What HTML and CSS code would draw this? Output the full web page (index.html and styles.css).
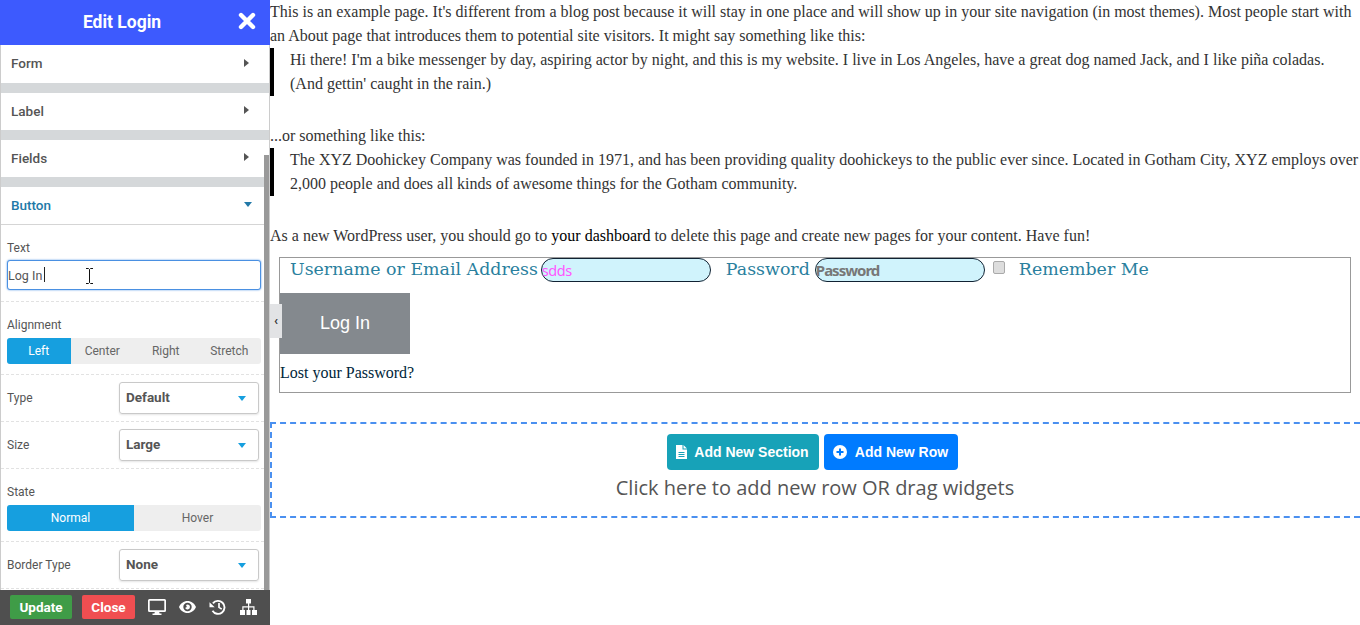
FILE: index.html
```html
<!DOCTYPE html>
<html>
  <head>
    <meta charset="utf-8">
    <meta name="viewport" content="width=device-width">
    <title>Edit Login</title>
    <link rel="stylesheet" href="styles.css">
  </head>
  <body>
    <div class="sidebar">
      <div class="side-head">
        <span class="side-title">Edit Login</span>
        <svg class="side-close" width="18" height="18" viewBox="0 0 18 18"><path d="M3 3l12 12M15 3L3 15" stroke="#fff" stroke-width="4.4" stroke-linecap="round"/></svg>
      </div>

      <div class="side-body">
        <div class="acc"><span>Form</span><i class="arrow-right"></i></div>
        <div class="acc"><span>Label</span><i class="arrow-right"></i></div>
        <div class="acc"><span>Fields</span><i class="arrow-right"></i></div>
        <div class="acc open"><span>Button</span><i class="arrow-down"></i></div>

        <div class="field field-text">
          <label>Text</label>
          <div class="text-wrap">
            <input class="text-input" type="text" value="Log In">
            <i class="caret"></i>
            <svg class="ibeam" width="9" height="16" viewBox="0 0 9 16"><path d="M1 .5h2.500l1 1 1-1H8M4.500 1.500v13M1 15.500h2.500l1-1 1 1H8" fill="none" stroke="#111" stroke-width="1"/></svg>
          </div>
        </div>

        <div class="field field-seg">
          <label>Alignment</label>
          <div class="seg">
            <span class="active">Left</span><span>Center</span><span>Right</span><span>Stretch</span>
          </div>
        </div>

        <div class="field field-row">
          <label>Type</label>
          <div class="select"><b>Default</b><i class="arrow-blue"></i></div>
        </div>

        <div class="field field-row">
          <label>Size</label>
          <div class="select"><b>Large</b><i class="arrow-blue"></i></div>
        </div>

        <div class="field field-seg">
          <label>State</label>
          <div class="seg">
            <span class="active">Normal</span><span>Hover</span>
          </div>
        </div>

        <div class="field field-row">
          <label>Border Type</label>
          <div class="select"><b>None</b><i class="arrow-blue"></i></div>
        </div>
      </div>

      <div class="scroll-thumb"></div>

      <div class="side-foot">
        <button class="btn-update">Update</button>
        <button class="btn-close">Close</button>
        <svg class="foot-icon" width="18" height="16" viewBox="0 0 18 16"><path fill="#fff" d="M1.500 0h15A1.500 1.500 0 0 1 18 1.500v10a1.500 1.500 0 0 1-1.500 1.500H11.200l.4 1.500h1.900V16h-9v-1.500h1.900l.4-1.500H1.500A1.500 1.500 0 0 1 0 11.500v-10A1.500 1.500 0 0 1 1.500 0zM1.700 1.700v9.600h14.600V1.700z"/></svg>
        <svg class="foot-icon" width="17" height="12" viewBox="0 0 17 12"><path fill="#fff" fill-rule="evenodd" d="M8.500 0C12.300 0 15.500 2.400 17 6c-1.500 3.600-4.700 6-8.500 6S1.500 9.600 0 6c1.500-3.600 4.700-6 8.500-6zm0 1.800A4.200 4.200 0 1 0 8.500 10.200 4.200 4.200 0 0 0 8.500 1.800zM8.500 3.500a2.500 2.500 0 1 1-2.400 3.200c.9.300 1.900-.6 1.500-1.600-.2-.5-.5-.8-.8-.9.400-.4 1-.7 1.700-.7z"/></svg>
        <svg class="foot-icon" width="18" height="16" viewBox="0 0 17 16"><path fill="none" stroke="#fff" stroke-width="1.900" d="M3.400 4.300A6.500 6.500 0 1 1 3 11.800"/><path fill="#fff" d="M0 3.200l5.200 5H0z"/><path fill="none" stroke="#fff" stroke-width="1.700" d="M9.500 4v4.400l2.700 1.700"/></svg>
        <svg class="foot-icon" width="17" height="16" viewBox="0 0 17 16"><path fill="#fff" d="M6 0h5v4.500H9.200v2.700h5.300V11h2.500v5h-5v-5h1.300V8.400H9.200V11h1.300v5h-4v-5h1.500V8.400H3.500V11H5v5H0v-5h2.300V7.200H8V4.500H6z"/></svg>
      </div>
    </div>

    <div class="collapse-tab">‹</div>

    <div class="content">
      <p>This is an example page. It's different from a blog post because it will stay in one place and will show up in your site navigation (in most themes). Most people start with an About page that introduces them to potential site visitors. It might say something like this:</p>
      <blockquote>Hi there! I'm a bike messenger by day, aspiring actor by night, and this is my website. I live in Los Angeles, have a great dog named Jack, and I like piña coladas. (And gettin' caught in the rain.)</blockquote>
      <p>...or something like this:</p>
      <blockquote>The XYZ Doohickey Company was founded in 1971, and has been providing quality doohickeys to the public ever since. Located in Gotham City, XYZ employs over 2,000 people and does all kinds of awesome things for the Gotham community.</blockquote>
      <p class="last">As a new WordPress user, you should go to <a href="#">your dashboard</a> to delete this page and create new pages for your content. Have fun!</p>

      <form class="login">
        <div class="login-fields">
          <label class="login-label first">Username or Email Address</label>
          <input class="login-input" type="text" value="sdds">
          <label class="login-label second">Password</label>
          <input class="login-input pass" type="text" placeholder="Password">
          <input class="login-check" type="checkbox">
          <label class="login-label third">Remember Me</label>
        </div>
        <button class="login-btn" type="button">Log In</button>
        <a class="lost" href="#">Lost your Password?</a>
      </form>

      <div class="dropzone">
        <div class="drop-btns">
          <span class="drop-btn teal">
            <svg width="11" height="14" viewBox="0 0 11 14"><path fill="#fff" d="M0 0h6.500v4.500H11V14H0zM7.500 0L11 3.500H7.500z"/><path stroke="#17a2b8" stroke-width="1" d="M2.500 7.500h6M2.500 9.500h6M2.500 11.500h6"/></svg>
            Add New Section
          </span>
          <span class="drop-btn blue">
            <svg width="14" height="14" viewBox="0 0 14 14"><circle cx="7" cy="7" r="7" fill="#fff"/><path d="M7 3.500v7M3.500 7h7" stroke="#007bff" stroke-width="2"/></svg>
            Add New Row
          </span>
        </div>
        <div class="drop-text">Click here to add new row OR drag widgets</div>
      </div>
    </div>
  </body>
</html>
```

FILE: styles.css
```css
html, body {
  margin: 0;
  height: 625px;
  overflow: hidden;
}

body {
  display: flex;
  position: relative;
  background-color: #fff;
  font-family: 'Liberation Serif', serif;
  font-size: 16px;
  line-height: 24px;
  color: #333;
}

/* left editor panel */
.sidebar {
  position: relative;
  flex: 0 0 270px;
  width: 270px;
  height: 625px;
  display: flex;
  flex-direction: column;
  font-family: Roboto, sans-serif;
  color: #555;
}

.side-head {
  flex: 0 0 45px;
  display: flex;
  align-items: center;
  justify-content: center;
  position: relative;
  padding-bottom: 2px;
  box-sizing: border-box;
  background-color: #3d5afe;
}

.side-title {
  color: #fff;
  font-size: 17.5px;
  font-weight: bold;
  margin-right: 26px;
}

.side-close {
  position: absolute;
  right: 14px;
  top: 12px;
}

.side-body {
  flex: 1;
  min-height: 0;
  overflow: hidden;
  border-left: 1px solid #ccc;
  border-right: 1px solid #ccc;
}

.acc {
  height: 37px;
  margin-bottom: 10px;
  padding: 0 20px 2px 10px;
  box-sizing: border-box;
  display: flex;
  align-items: center;
  justify-content: space-between;
  font-size: 13.5px;
  font-weight: 500;
  background-color: #fff;
  box-shadow: 0 10px 0 #d5d8da;
}

.acc:first-child {
  height: 38px;
}

.acc.open {
  height: 38px;
  margin-bottom: 0;
  border-bottom: 1px solid #d5d5d5;
  color: #2279a8;
  box-shadow: none;
}

.arrow-right {
  width: 0;
  height: 0;
  margin-top: -1px;
  border-left: 5px solid #555;
  border-top: 4px solid transparent;
  border-bottom: 4px solid transparent;
}

.arrow-down {
  width: 0;
  height: 0;
  margin-right: -3px;
  border-top: 5px solid #2279a8;
  border-left: 4px solid transparent;
  border-right: 4px solid transparent;
}

.field {
  padding: 0 8px 0 6px;
  border-bottom: 1px dashed #e2e2e2;
  font-size: 12px;
  line-height: 14px;
  box-sizing: border-box;
}

.field label {
  display: block;
}

.field-text {
  height: 77px;
  padding-top: 16px;
}

.text-wrap {
  position: relative;
  margin-top: 5px;
}

.text-input {
  display: block;
  width: 100%;
  height: 30px;
  box-sizing: border-box;
  padding: 0;
  border: 1px solid #4a90e2;
  border-radius: 3px;
  box-shadow: 0 0 2px #4a90e2;
  outline: none;
  font-family: Roboto, sans-serif;
  font-size: 12.5px;
  color: #555;
}

.caret {
  position: absolute;
  left: 37px;
  top: 7px;
  width: 1px;
  height: 15px;
  background-color: #222;
}

.ibeam {
  position: absolute;
  left: 78px;
  top: 8px;
}

.field-seg {
  height: 73px;
  padding-top: 16px;
}

.seg {
  display: flex;
  height: 26px;
  margin-top: 6px;
  border-radius: 3px;
  overflow: hidden;
  background-color: #eee;
}

.seg span {
  flex: 1;
  text-align: center;
  line-height: 27px;
  color: #666;
}

.seg .active {
  background-color: #169fdf;
  color: #fff;
}

.field-row {
  height: 47px;
  display: flex;
  align-items: center;
  justify-content: space-between;
  padding-right: 10px;
}

.select {
  width: 140px;
  height: 32px;
  box-sizing: border-box;
  padding: 0 12px 2px 6px;
  display: flex;
  align-items: center;
  justify-content: space-between;
  border: 1px solid #c9c9c9;
  border-radius: 3px;
  box-shadow: 0 1px 2px #e5e5e5;
  font-size: 13.5px;
  color: #555;
}

.arrow-blue {
  width: 0;
  height: 0;
  margin-top: 2px;
  border-top: 5px solid #169fdf;
  border-left: 4px solid transparent;
  border-right: 4px solid transparent;
}

.scroll-thumb {
  position: absolute;
  left: 264px;
  top: 155px;
  width: 5px;
  height: 435px;
  background-color: #999;
}

.side-foot {
  flex: 0 0 35px;
  display: flex;
  align-items: center;
  padding: 0 0 2px 10px;
  box-sizing: border-box;
  background-color: #4f4f4f;
}

.side-foot button {
  height: 24px;
  padding: 0;
  border: none;
  border-radius: 2px;
  color: #fff;
  font-family: Roboto, sans-serif;
  font-size: 13.5px;
  font-weight: bold;
}

.btn-update {
  width: 62px;
  background-color: #3f9c47;
}

.btn-close {
  width: 53px;
  margin-left: 10px;
  margin-right: 13px;
  background-color: #f04e51;
}

.foot-icon {
  margin-right: 13px;
}

.collapse-tab {
  position: absolute;
  left: 270px;
  top: 304px;
  width: 12px;
  height: 34px;
  background-color: #e2e3e5;
  color: #333;
  font-family: Roboto, sans-serif;
  font-size: 13px;
  font-weight: bold;
  line-height: 34px;
  text-align: center;
}

/* page content */
.content {
  flex: 1;
  min-width: 0;
}

.content p {
  margin: 0;
}

.content p.last {
  margin-bottom: 9px;
}

blockquote {
  margin: 0 0 28px;
  padding-left: 16px;
  border-left: 4px solid #000;
}

.content a {
  color: #000;
  text-decoration: none;
}

.login {
  width: 1072px;
  height: 136px;
  margin-left: 9px;
  box-sizing: border-box;
  border: 1px solid #999;
}

.login-fields {
  display: flex;
  align-items: flex-start;
  height: 35px;
}

.login-label {
  font-family: 'DejaVu Serif', serif;
  font-size: 17.4px;
  line-height: 22px;
  color: #2a7f9e;
}

.first {
  margin-left: 10px;
  margin-right: 3px;
}

.second {
  margin-left: 15px;
  margin-right: 5px;
}

.third {
  margin-left: 14px;
}

.login-input {
  width: 170px;
  height: 24px;
  box-sizing: border-box;
  padding: 0;
  border: 1px solid #123;
  border-radius: 12px;
  background-color: #d0f3fc;
  outline: none;
  font-family: 'Noto Sans', sans-serif;
  font-size: 14.5px;
  letter-spacing: -.5px;
  color: #ff55ff;
}

.login-input.pass {
  font-size: 15px;
  font-weight: bold;
  letter-spacing: -1px;
}

.login-input.pass::placeholder {
  color: #777;
  opacity: 1;
}

.login-check {
  appearance: none;
  width: 12px;
  height: 13px;
  box-sizing: border-box;
  margin: 3px 0 0 8px;
  border: 1px solid #aaa;
  border-radius: 2px;
  background-color: #ddd;
}

.login-btn {
  display: block;
  width: 130px;
  height: 61px;
  padding: 0;
  border: none;
  background-color: #84898e;
  color: #fff;
  font-family: 'Liberation Sans', sans-serif;
  font-size: 18px;
}

.lost {
  display: block;
  margin-top: 7px;
}

.content a.lost {
  color: #00263a;
}

.dropzone {
  height: 96px;
  margin-top: 29px;
  box-sizing: border-box;
  border: 2px dashed #4a90f0;
  border-right: none;
  padding-top: 10px;
  text-align: center;
}

.drop-btns {
  display: flex;
  justify-content: center;
  gap: 5px;
  padding-right: 8px;
}

.drop-btn {
  display: flex;
  align-items: center;
  justify-content: center;
  gap: 7px;
  height: 36px;
  border-radius: 4px;
  color: #fff;
  font-family: 'Liberation Sans', sans-serif;
  font-size: 14px;
  font-weight: bold;
}

.teal {
  width: 152px;
  background-color: #17a2b8;
}

.blue {
  width: 134px;
  gap: 8px;
  background-color: #007bff;
}

.drop-text {
  margin-top: 4px;
  padding-right: 2px;
  font-family: 'Open Sans', sans-serif;
  font-size: 20px;
  line-height: 28px;
  color: #555;
}
```
